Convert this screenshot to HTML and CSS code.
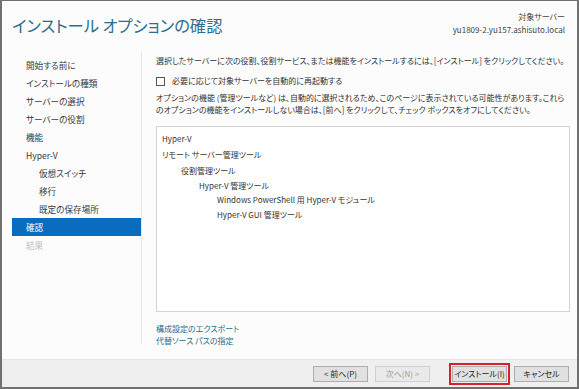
FILE: index.html
```html
<!DOCTYPE html>
<html lang="ja">
<head>
<meta charset="utf-8">
<link rel="stylesheet" href="styles.css">
</head>
<body>
<div class="window">
  <header class="header">
    <h1 class="title">インストール オプションの確認</h1>
    <div class="target">
      <div>対象サーバー</div>
      <div>yu1809-2.yu157.ashisuto.local</div>
    </div>
  </header>
  <div class="main">
    <nav class="nav">
      <div class="nav-item">開始する前に</div>
      <div class="nav-item">インストールの種類</div>
      <div class="nav-item">サーバーの選択</div>
      <div class="nav-item">サーバーの役割</div>
      <div class="nav-item">機能</div>
      <div class="nav-item">Hyper-V</div>
      <div class="nav-item sub">仮想スイッチ</div>
      <div class="nav-item sub">移行</div>
      <div class="nav-item sub">既定の保存場所</div>
      <div class="nav-item active">確認</div>
      <div class="nav-item disabled">結果</div>
    </nav>
    <section class="content">
      <p class="intro">選択したサーバーに次の役割、役割サービス、または機能をインストールするには、[インストール] をクリックしてください。</p>
      <label class="check"><span class="box"></span>必要に応じて対象サーバーを自動的に再起動する</label>
      <p class="note">オプションの機能 (管理ツールなど) は、自動的に選択されるため、このページに表示されている可能性があります。これらのオプションの機能をインストールしない場合は、[前へ] をクリックして、チェック ボックスをオフにしてください。</p>
      <div class="list">
        <div class="group">Hyper-V</div>
        <div class="group">リモート サーバー管理ツール</div>
        <div class="l1">役割管理ツール</div>
        <div class="l2">Hyper-V 管理ツール</div>
        <div class="l3">Windows PowerShell 用 Hyper-V モジュール</div>
        <div class="l3">Hyper-V GUI 管理ツール</div>
      </div>
      <div class="links">
        <a class="link">構成設定のエクスポート</a>
        <a class="link">代替ソース パスの指定</a>
      </div>
    </section>
  </div>
  <footer class="footer">
    <button class="btn">&lt; 前へ(P)</button>
    <button class="btn btn-disabled">次へ(N) &gt;</button>
    <span class="highlight"><button class="btn">インストール(I)</button></span>
    <button class="btn">キャンセル</button>
  </footer>
</div>
</body>
</html>
```
FILE: styles.css
```css
* { box-sizing: border-box; }
html, body { margin: 0; padding: 0; }
body {
  font-family: "Noto Sans CJK JP", sans-serif;
  font-feature-settings: "palt";
  color: #333;
  background: #fff;
}
.window {
  width: 579px;
  height: 389px;
  border: 2px solid #707070;
  border-top-width: 1px;
  background: #fcfcfc;
  display: flex;
  flex-direction: column;
}
.header {
  height: 47px;
  display: flex;
  justify-content: space-between;
  align-items: flex-start;
  padding: 0 12px 0 10px;
}
.title {
  margin: 11px 0 0 0;
  font-size: 16.3px;
  font-weight: 400;
  color: #2d6e90;
  line-height: 26px;
}
.target {
  margin-top: 9px;
  text-align: right;
  font-size: 8px;
  line-height: 13px;
  color: #444;
}
.main {
  flex: 1;
  display: flex;
}
.nav {
  width: 140px;
  padding: 4px 0 0 10px;
  margin: 4px 0 15px 0;
  border-right: 1px solid #e4e4e4;
}
.nav-item {
  height: 18px;
  line-height: 18px;
  font-size: 8.6px;
  padding-left: 14px;
  color: #3a3a3a;
}
.nav-item.sub { padding-left: 27px; }
.nav-item.active { background: #0a6cbf; color: #fff; }
.nav-item.disabled { color: #bcbcbc; }
.content {
  flex: 1;
  padding: 7px 7px 0 14px;
  font-size: 8px;
  color: #333;
}
.intro {
  margin: 0;
  line-height: 12px;
  white-space: nowrap;
}
.check {
  display: flex;
  align-items: center;
  margin-top: 8px;
  height: 12px;
  line-height: 12px;
}
.box {
  width: 9px;
  height: 9px;
  border: 1px solid #555;
  background: #fff;
  margin-right: 7px;
}
.note {
  margin: 5px 0 0 0;
  line-height: 12px;
}
.list {
  margin-top: 10px;
  height: 186px;
  background: #fff;
  border: 1px solid #d4d4d4;
  padding: 5px 5px;
  line-height: 14.5px;
}
.group { margin-bottom: 1.5px; }
.l1 { padding-left: 19px; }
.l2 { padding-left: 37px; }
.l3 { padding-left: 55px; }
.links {
  margin-top: 11px;
  display: flex;
  flex-direction: column;
  line-height: 11.5px;
}
.link { color: #2a6b8f; }
.footer {
  height: 28px;
  background: #efefef;
  border-top: 1px solid #e6e6e6;
  display: flex;
  align-items: center;
  justify-content: flex-end;
  padding-right: 8px;
  gap: 7px;
}
.btn {
  font-family: "Noto Sans CJK JP", sans-serif;
  font-feature-settings: "palt";
  font-size: 8px;
  width: 55px;
  height: 16px;
  padding: 0;
  background: #e1e1e1;
  border: 1px solid #adadad;
  color: #222;
  line-height: 14px;
}
.btn-disabled { color: #9c9c9c; border-color: #cfcfcf; background: #eaeaea; margin-right: 15px; }
.highlight {
  display: flex;
  border: 2px solid #d9202a;
  padding: 1px;
  margin: 0 -3px;
}
```
